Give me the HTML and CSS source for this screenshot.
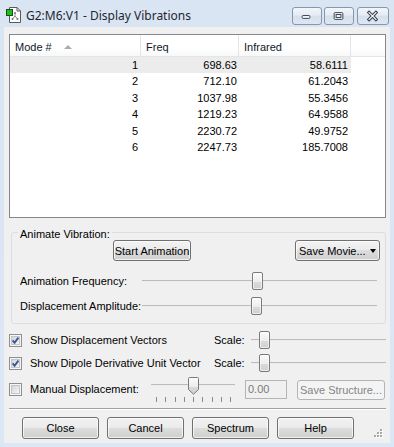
FILE: index.html
```html
<!DOCTYPE html>
<html>
<head>
<meta charset="utf-8">
<link rel="stylesheet" href="styles.css">
</head>
<body>
<div class="window">
  <div class="titlebar">
    <svg class="appicon" width="16" height="16" viewBox="0 0 16 16">
      <path d="M3.5 0.5 H11 L14.5 4 V15.5 H3.5 Z" fill="#fff" stroke="#5a5a5a"/>
      <path d="M11 0.5 V4 H14.5" fill="none" stroke="#5a5a5a"/>
      <path d="M9 6 V9 M9 9 L6.5 12 M9 9 L11.5 12" stroke="#8a8a8a" stroke-width="1"/>
      <circle cx="9" cy="6" r="1" fill="#777"/>
      <circle cx="6.5" cy="12" r="1" fill="#777"/>
      <circle cx="11.5" cy="12" r="1" fill="#777"/>
      <rect x="0.5" y="2.5" width="6" height="6" fill="#19c219" stroke="#1d4d1d"/>
    </svg>
    <span class="title">G2:M6:V1 - Display Vibrations</span>
    <div class="capbtns">
      <div class="capbtn">
        <svg width="30" height="18" viewBox="0 0 30 18"><rect x="10.5" y="8.5" width="8" height="3" rx="1" fill="#f4f6f9" stroke="#36404e"/></svg>
      </div>
      <div class="capbtn">
        <svg width="30" height="18" viewBox="0 0 30 18"><rect x="10.5" y="5.5" width="9" height="7" rx="1" fill="#f4f6f9" stroke="#36404e"/><rect x="12.5" y="7.5" width="5" height="3" fill="none" stroke="#36404e"/></svg>
      </div>
      <div class="capbtn close">
        <svg width="32" height="18" viewBox="0 0 32 18"><path d="M12.5 5.5 L19.5 12.5 M19.5 5.5 L12.5 12.5" stroke="#36404e" stroke-width="3.4" stroke-linecap="square"/><path d="M12.5 5.5 L19.5 12.5 M19.5 5.5 L12.5 12.5" stroke="#f4f6f9" stroke-width="1.4" stroke-linecap="square"/></svg>
      </div>
    </div>
  </div>

  <div class="client">
    <div class="listbox">
      <div class="lhead">
        <div class="hc h1">Mode #<span class="sort"></span></div>
        <div class="hc h2">Freq</div>
        <div class="hc h3">Infrared</div>
        <div class="hc h4"></div>
      </div>
      <div class="lrow sel"><span class="c1">1</span><span class="c2">698.63</span><span class="c3">58.6111</span></div>
      <div class="lrow"><span class="c1">2</span><span class="c2">712.10</span><span class="c3">61.2043</span></div>
      <div class="lrow"><span class="c1">3</span><span class="c2">1037.98</span><span class="c3">55.3456</span></div>
      <div class="lrow"><span class="c1">4</span><span class="c2">1219.23</span><span class="c3">64.9588</span></div>
      <div class="lrow"><span class="c1">5</span><span class="c2">2230.72</span><span class="c3">49.9752</span></div>
      <div class="lrow"><span class="c1">6</span><span class="c2">2247.73</span><span class="c3">185.7008</span></div>
    </div>

    <div class="group">
      <span class="grouplabel">Animate Vibration:</span>
      <div class="btnrow">
        <div class="btn start">Start Animation</div>
        <div class="btn savemovie">Save Movie...<span class="ddarrow"></span></div>
      </div>
      <div class="srow first">
        <span class="slabel">Animation Frequency:</span>
        <div class="slider gslider"><div class="thumb t110"></div></div>
      </div>
      <div class="srow">
        <span class="slabel">Displacement Amplitude:</span>
        <div class="slider gslider"><div class="thumb t109"></div></div>
      </div>
    </div>

    <div class="crow first">
      <svg class="cb" width="13" height="13" viewBox="0 0 13 13">
        <defs><linearGradient id="g1" x1="0" y1="0" x2="1" y2="1"><stop offset="0" stop-color="#cfd3d8"/><stop offset="1" stop-color="#f7f7f7"/></linearGradient></defs>
        <rect x="0.5" y="0.5" width="12" height="12" fill="#f6f6f6" stroke="#8e8f8f"/>
        <rect x="2.5" y="2.5" width="8" height="8" fill="url(#g1)" stroke="#c2c6cb"/>
        <path d="M3.6 6.3 L5.6 8.8 L9.4 3.6" fill="none" stroke="#3e5596" stroke-width="1.9"/>
      </svg>
      <span class="clabel">Show Displacement Vectors</span>
      <span class="scale">Scale:</span>
      <div class="slider sslider"><div class="thumb t8"></div></div>
    </div>
    <div class="crow">
      <svg class="cb" width="13" height="13" viewBox="0 0 13 13">
        <defs><linearGradient id="g2" x1="0" y1="0" x2="1" y2="1"><stop offset="0" stop-color="#cfd3d8"/><stop offset="1" stop-color="#f7f7f7"/></linearGradient></defs>
        <rect x="0.5" y="0.5" width="12" height="12" fill="#f6f6f6" stroke="#8e8f8f"/>
        <rect x="2.5" y="2.5" width="8" height="8" fill="url(#g2)" stroke="#c2c6cb"/>
        <path d="M3.6 6.3 L5.6 8.8 L9.4 3.6" fill="none" stroke="#3e5596" stroke-width="1.9"/>
      </svg>
      <span class="clabel">Show Dipole Derivative Unit Vector</span>
      <span class="scale">Scale:</span>
      <div class="slider sslider"><div class="thumb t8"></div></div>
    </div>
    <div class="mrow">
      <svg class="cb cbm" width="13" height="13" viewBox="0 0 13 13">
        <defs><linearGradient id="g3" x1="0" y1="0" x2="1" y2="1"><stop offset="0" stop-color="#cfd3d8"/><stop offset="1" stop-color="#f7f7f7"/></linearGradient></defs>
        <rect x="0.5" y="0.5" width="12" height="12" fill="#f6f6f6" stroke="#8e8f8f"/>
        <rect x="2.5" y="2.5" width="8" height="8" fill="url(#g3)" stroke="#c2c6cb"/>
      </svg>
      <span class="mlabel">Manual Displacement:</span>
      <div class="mslider">
        <div class="mtrackrow">
          <svg class="pthumb" width="11" height="18" viewBox="0 0 11 18">
            <defs><linearGradient id="g4" x1="0" y1="0" x2="0" y2="1"><stop offset="0" stop-color="#fbfbfb"/><stop offset="0.55" stop-color="#ececec"/><stop offset="0.56" stop-color="#dadada"/><stop offset="1" stop-color="#d0d0d0"/></linearGradient></defs>
            <path d="M0.5 1.5 Q0.5 0.5 1.5 0.5 H9.5 Q10.5 0.5 10.5 1.5 V12.5 L5.5 17.2 L0.5 12.5 Z" fill="url(#g4)" stroke="#7a7a7a"/>
          </svg>
        </div>
        <div class="ticks"><i></i><i></i><i></i><i></i><i></i><i></i><i></i><i></i><i></i></div>
      </div>
      <div class="tbox">0.00</div>
      <div class="btn dis savestruct">Save Structure...</div>
    </div>

    <div class="sep"></div>

    <div class="brow">
      <div class="btn bb">Close</div>
      <div class="btn bb">Cancel</div>
      <div class="btn bb">Spectrum</div>
      <div class="btn bb">Help</div>
      <svg class="grip" width="9" height="9" viewBox="0 0 9 9">
        <g fill="#fff"><rect x="7" y="1" width="2" height="2"/><rect x="4" y="4" width="2" height="2"/><rect x="7" y="4" width="2" height="2"/><rect x="1" y="7" width="2" height="2"/><rect x="4" y="7" width="2" height="2"/><rect x="7" y="7" width="2" height="2"/></g>
        <g fill="#a9a9a9"><rect x="6" y="0" width="2" height="2"/><rect x="3" y="3" width="2" height="2"/><rect x="6" y="3" width="2" height="2"/><rect x="0" y="6" width="2" height="2"/><rect x="3" y="6" width="2" height="2"/><rect x="6" y="6" width="2" height="2"/></g>
      </svg>
    </div>
  </div>
</div>
</body>
</html>
```

FILE: styles.css
```css
html, body {
  margin: 0;
  padding: 0;
}
body {
  width: 394px;
  height: 447px;
  overflow: hidden;
  font-family: "Liberation Sans", Arial, sans-serif;
  font-size: 11px;
  color: #000;
}
.window {
  width: 394px;
  height: 447px;
  display: flex;
  flex-direction: column;
  background: linear-gradient(#dae5f3, #dce7f5);
}
.titlebar {
  height: 27px;
  display: flex;
  align-items: flex-start;
  flex: none;
}
.appicon {
  margin: 7px 0 0 6px;
  flex: none;
}
.title {
  margin: 7px 0 0 4px;
  line-height: 17px;
  font-family: "Noto Sans", "Open Sans", sans-serif;
  font-size: 12px;
  color: #1f2530;
  white-space: nowrap;
}
.capbtns {
  margin: 7px 5px 0 auto;
  display: flex;
  gap: 2px;
}
.capbtn {
  width: 30px;
  height: 18px;
  box-sizing: border-box;
  border: 1px solid #8796ad;
  border-radius: 3px;
  background: linear-gradient(#f2f6fb, #e4ebf4 45%, #d6e0ec 50%, #dde6f1);
  display: flex;
  overflow: hidden;
}
.capbtn svg {
  margin: -1px 0 0 -1px;
}
.capbtn.close {
  width: 32px;
  margin-left: 1px;
}
.client {
  margin: 0 4px 4px 4px;
  flex: 1;
  background: #f0f0f0;
  padding-top: 7px;
  display: flex;
  flex-direction: column;
}

/* list view */
.listbox {
  margin-left: 5px;
  width: 377px;
  height: 184px;
  box-sizing: border-box;
  border: 1px solid #828790;
  background: #fff;
  flex: none;
}
.lhead {
  display: flex;
  height: 22px;
  box-sizing: border-box;
  border-bottom: 1px solid #e5e5e5;
  background: linear-gradient(#ffffff, #ffffff 60%, #f7f8f9);
}
.hc {
  box-sizing: border-box;
  border-right: 1px solid #e3e5e8;
  padding: 3px 0 0 5px;
  line-height: 18px;
  color: #111827;
  white-space: nowrap;
}
.h1 { width: 131px; }
.h2 { width: 98px; }
.h3 { width: 112px; }
.h4 { flex: 1; border-right: none; }
.sort {
  display: inline-block;
  width: 0;
  height: 0;
  border-left: 4.5px solid transparent;
  border-right: 4.5px solid transparent;
  border-bottom: 4.5px solid #a9abae;
  margin-left: 12px;
  vertical-align: 2px;
}
.lrow {
  display: flex;
  width: 341px;
  height: 16.4px;
  line-height: 16.4px;
}
.lrow.sel {
  background: #ececec;
}
.lrow span {
  box-sizing: border-box;
  text-align: right;
}
.c1 { width: 131px; padding-right: 3px; }
.c2 { width: 98px; padding-right: 2px; }
.c3 { width: 112px; padding-right: 3px; }

/* group box */
.group {
  position: relative;
  margin: 14px 0 0 7px;
  width: 375px;
  height: 92px;
  box-sizing: border-box;
  border: 1px solid #d5dfe5;
  border-radius: 3px;
  padding-top: 7px;
  flex: none;
}
.grouplabel {
  position: absolute;
  left: 6px;
  top: -6px;
  padding: 0 2px;
  background: #f0f0f0;
  line-height: 14px;
}
.btnrow {
  display: flex;
  justify-content: space-between;
  padding: 0 5px 0 101px;
}
.btn {
  box-sizing: border-box;
  height: 21px;
  border: 1px solid #707070;
  border-radius: 3px;
  background: linear-gradient(#f2f2f2, #ebebeb 48%, #dddddd 50%, #cfcfcf);
  box-shadow: inset 0 0 0 1px rgba(255,255,255,0.7);
  display: flex;
  align-items: center;
  justify-content: center;
  white-space: nowrap;
}
.start { width: 78px; }
.savemovie {
  width: 85px;
  justify-content: flex-start;
  padding-left: 3px;
}
.ddarrow {
  width: 0;
  height: 0;
  border-left: 3.5px solid transparent;
  border-right: 3.5px solid transparent;
  border-top: 4px solid #000;
  margin-left: 4px;
}
.srow {
  display: flex;
  align-items: center;
  height: 20px;
  margin-top: 5px;
}
.srow.first {
  margin-top: 10px;
}
.slabel {
  width: 122px;
  padding-left: 8px;
  flex: none;
}
.slider {
  height: 20px;
  display: flex;
  align-items: center;
  background: linear-gradient(transparent 9px, #bcbcbc 9px, #bcbcbc 10px, #ececec 10px, #ececec 11px, transparent 11px);
}
.gslider {
  width: 235px;
}
.thumb {
  width: 11px;
  height: 18px;
  box-sizing: border-box;
  border: 1px solid #7a7a7a;
  border-radius: 2px;
  background: linear-gradient(#fbfbfb, #ececec 55%, #dadada 56%, #d0d0d0);
  box-shadow: inset 0 0 0 1px rgba(255,255,255,0.6);
}
.t110 { margin-left: 110px; }
.t109 { margin-left: 109px; }
.t8 { margin-left: 8px; }

/* check rows */
.crow {
  display: flex;
  align-items: center;
  height: 18px;
  margin-top: 5px;
  padding-left: 5px;
}
.crow.first {
  margin-top: 7px;
}
.cb {
  flex: none;
}
.clabel {
  margin-left: 8px;
  width: 184px;
  flex: none;
  white-space: nowrap;
}
.scale {
  width: 37px;
  flex: none;
}
.sslider {
  width: 135px;
}
.mrow {
  display: flex;
  align-items: flex-start;
  height: 26px;
  margin-top: 5px;
  padding-left: 5px;
}
.cbm {
  margin-top: 6px;
}
.mlabel {
  margin-left: 8px;
  width: 121px;
  flex: none;
  margin-top: 5px;
  line-height: 15px;
}
.mslider {
  width: 84px;
  flex: none;
  display: flex;
  flex-direction: column;
}
.mtrackrow {
  height: 18px;
  display: flex;
  background: linear-gradient(transparent 7px, #bcbcbc 7px, #bcbcbc 8px, #ececec 8px, #ececec 9px, transparent 9px);
}
.pthumb {
  margin-left: 37px;
}
.ticks {
  margin: 2px 0 0 5px;
  width: 75px;
  height: 5px;
  display: flex;
  justify-content: space-between;
}
.ticks i {
  width: 1px;
  height: 5px;
  background: #8a8a8a;
}
.tbox {
  margin: 3px 0 0 10px;
  width: 42px;
  height: 19px;
  box-sizing: border-box;
  border: 1px solid #b5b5b5;
  color: #7a7a7a;
  padding-left: 2px;
  line-height: 17px;
  flex: none;
}
.btn.dis {
  border-color: #b1b5b9;
  background: #f4f4f4;
  box-shadow: none;
  color: #848484;
}
.savestruct {
  margin: 3px 0 0 10px;
  width: 88px;
  height: 20px;
  flex: none;
}
.sep {
  margin: 5px 0 0 5px;
  width: 377px;
  height: 0;
  border-top: 1px solid #a0a0a0;
  border-bottom: 1px solid #fff;
}
.brow {
  display: flex;
  gap: 8px;
  margin-top: 7px;
  padding-left: 18px;
  height: 22px;
}
.bb {
  width: 77px;
  height: 22px;
}
.grip {
  margin: 0 7px 0 auto;
  align-self: flex-end;
  margin-bottom: 1px;
}
```
